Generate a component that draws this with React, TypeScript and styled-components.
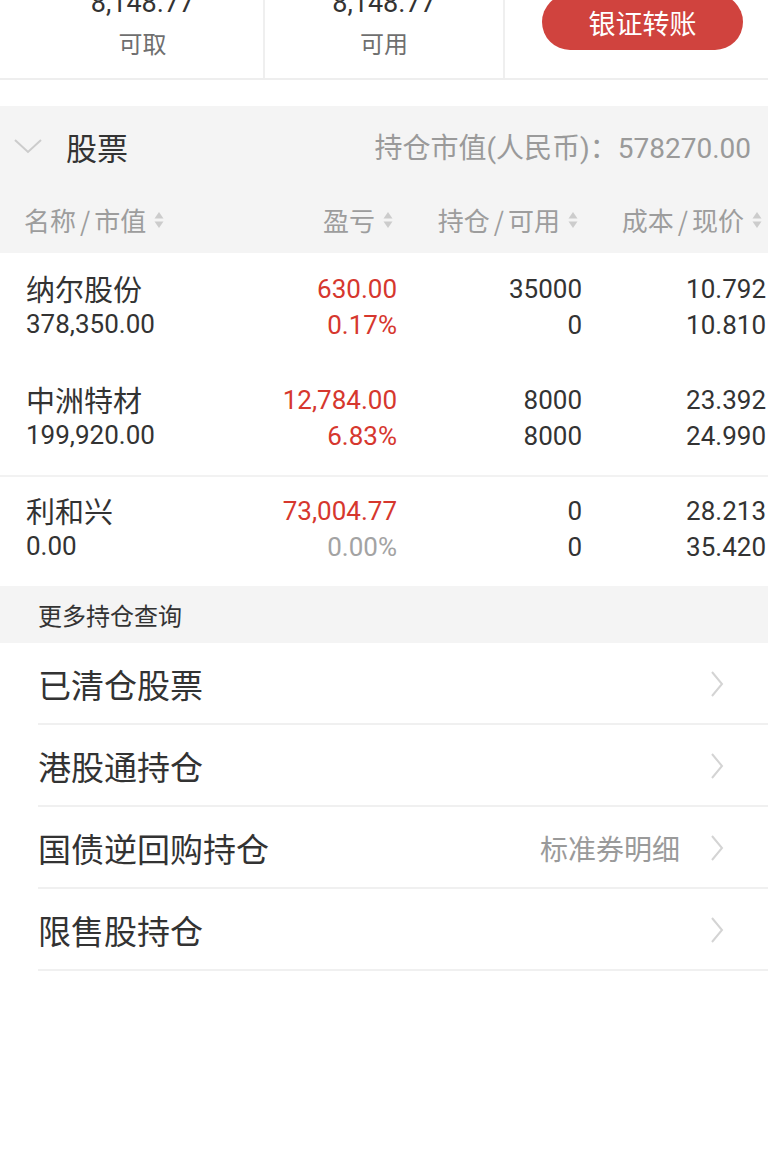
import styled, { createGlobalStyle } from 'styled-components'

const GlobalStyle = createGlobalStyle`
  body {
    margin: 0;
    background: #ffffff;
    font-family: Roboto, "Noto Sans CJK SC", sans-serif;
  }
`

const RED = '#d6372e'

interface Holding {
  name: string
  value: string
  profit: string
  ratio: string
  ratioMuted?: boolean
  position: string
  available: string
  cost: string
  price: string
  divider?: boolean
}

const holdings: Holding[] = [
  {
    name: '纳尔股份',
    value: '378,350.00',
    profit: '630.00',
    ratio: '0.17%',
    position: '35000',
    available: '0',
    cost: '10.792',
    price: '10.810',
  },
  {
    name: '中洲特材',
    value: '199,920.00',
    profit: '12,784.00',
    ratio: '6.83%',
    position: '8000',
    available: '8000',
    cost: '23.392',
    price: '24.990',
  },
  {
    name: '利和兴',
    value: '0.00',
    profit: '73,004.77',
    ratio: '0.00%',
    ratioMuted: true,
    position: '0',
    available: '0',
    cost: '28.213',
    price: '35.420',
    divider: true,
  },
]

const columns = [
  { left: '名称', right: '市值', align: 'start' as const },
  { left: '盈亏', align: 'end' as const },
  { left: '持仓', right: '可用', align: 'end' as const },
  { left: '成本', right: '现价', align: 'end' as const },
]

const queries = [
  { label: '已清仓股票' },
  { label: '港股通持仓' },
  { label: '国债逆回购持仓', extra: '标准券明细' },
  { label: '限售股持仓' },
]

const SortIcon = () => (
  <svg width="10" height="18" viewBox="0 0 10 18">
    <path d="M5 1 L9.5 7.5 H0.5 Z" fill="#cccccc" />
    <path d="M5 17 L9.5 10.5 H0.5 Z" fill="#cccccc" />
  </svg>
)

const ChevronDown = () => (
  <svg width="30" height="16" viewBox="0 0 30 16">
    <path d="M2 2 L15 14 L28 2" fill="none" stroke="#cccccc" strokeWidth="2" />
  </svg>
)

const ChevronRight = () => (
  <svg width="14" height="28" viewBox="0 0 14 28">
    <path d="M2 2 L12 14 L2 26" fill="none" stroke="#d4d4d4" strokeWidth="2" />
  </svg>
)

const App = () => {
  return (
    <Page>
      <GlobalStyle />
      <TopBar>
        <FundCell $first>
          <FundValue>8,148.77</FundValue>
          <FundLabel>可取</FundLabel>
        </FundCell>
        <FundCell>
          <FundValue>8,148.77</FundValue>
          <FundLabel>可用</FundLabel>
        </FundCell>
        <ActionCell>
          <TransferButton>银证转账</TransferButton>
        </ActionCell>
      </TopBar>

      <Section>
        <SectionTitle>
          <TitleLeft>
            <ChevronDown />
            <TitleText>股票</TitleText>
          </TitleLeft>
          <MarketValue>持仓市值(人民币)：578270.00</MarketValue>
        </SectionTitle>
        <HeaderRow>
          {columns.map((c) => (
            <HeaderCell key={c.left} $align={c.align}>
              <span>
                {c.left}
                {c.right && (
                  <>
                    <Slash>/</Slash>
                    {c.right}
                  </>
                )}
              </span>
              <SortIcon />
            </HeaderCell>
          ))}
        </HeaderRow>
      </Section>

      <Holdings>
        {holdings.map((h) => (
          <HoldingRow key={h.name} $divider={!!h.divider}>
            <Cell $align="start">
              <StockName>{h.name}</StockName>
              <Num>{h.value}</Num>
            </Cell>
            <Cell $align="end">
              <Num $color={RED}>{h.profit}</Num>
              <Num $color={h.ratioMuted ? '#a3a3a3' : RED}>{h.ratio}</Num>
            </Cell>
            <Cell $align="end">
              <Num>{h.position}</Num>
              <Num>{h.available}</Num>
            </Cell>
            <Cell $align="end">
              <Num>{h.cost}</Num>
              <Num>{h.price}</Num>
            </Cell>
          </HoldingRow>
        ))}
      </Holdings>

      <MoreHeader>更多持仓查询</MoreHeader>
      <QueryList>
        {queries.map((q) => (
          <QueryItem key={q.label}>
            <QueryLabel>{q.label}</QueryLabel>
            <QueryRight>
              {q.extra && <QueryExtra>{q.extra}</QueryExtra>}
              <ChevronRight />
            </QueryRight>
          </QueryItem>
        ))}
      </QueryList>
    </Page>
  )
}

export default App

const Page = styled.div`
  width: 768px;
  min-height: 1174px;
  overflow: hidden;
  background: #ffffff;
`

const TopBar = styled.div`
  display: grid;
  grid-template-columns: 265px 240px 1fr;
  height: 98px;
  margin-top: -20px;
  border-bottom: 2px solid #eeeeee;
  margin-bottom: 26px;
`

const FundCell = styled.div<{ $first?: boolean }>`
  display: flex;
  flex-direction: column;
  align-items: center;
  padding: 8px 0 0 ${({ $first }) => ($first ? '22px' : '0')};
  border-right: 2px solid #efefef;
`

const FundValue = styled.div`
  font-family: Roboto, sans-serif;
  font-size: 27px;
  line-height: 30px;
  color: #333333;
`

const FundLabel = styled.div`
  margin-top: 10px;
  font-family: "Noto Sans CJK SC", sans-serif;
  font-size: 24px;
  line-height: 30px;
  color: #6f6f6f;
`

const ActionCell = styled.div`
  display: flex;
  justify-content: center;
  padding: 14px 0 0 12px;
`

const TransferButton = styled.div`
  width: 201px;
  height: 56px;
  border-radius: 28px;
  background: #d0433e;
  color: #ffffff;
  display: flex;
  align-items: center;
  justify-content: center;
  font-family: "Noto Sans CJK SC", sans-serif;
  font-size: 27px;
`

const Section = styled.div`
  background: #f4f4f4;
`

const SectionTitle = styled.div`
  display: flex;
  align-items: center;
  justify-content: space-between;
  height: 80px;
  padding: 0 17px 0 13px;
`

const TitleLeft = styled.div`
  display: flex;
  align-items: center;
  gap: 23px;
`

const TitleText = styled.div`
  font-family: "Noto Sans CJK SC", sans-serif;
  font-size: 31px;
  color: #333333;
`

const MarketValue = styled.div`
  font-family: Roboto, "Noto Sans CJK SC", sans-serif;
  font-size: 28px;
  color: #9a9a9a;
`

const HeaderRow = styled.div`
  display: grid;
  grid-template-columns: 193px 180px 185px 184px;
  align-items: center;
  height: 67px;
  padding: 0 2px 0 24px;
`

const HeaderCell = styled.div<{ $align: 'start' | 'end' }>`
  display: flex;
  align-items: center;
  justify-content: ${({ $align }) => ($align === 'end' ? 'flex-end' : 'flex-start')};
  gap: 8px;
  padding-right: ${({ $align }) => ($align === 'end' ? '4px' : '0')};
  font-family: "Noto Sans CJK SC", sans-serif;
  font-size: 26px;
  color: #9d9d9d;
  white-space: nowrap;
`

const Slash = styled.span`
  margin: 0 4px;
`

const Holdings = styled.div`
  background: #ffffff;
`

const HoldingRow = styled.div<{ $divider: boolean }>`
  display: grid;
  grid-template-columns: 191px 180px 185px 184px;
  height: 111px;
  box-sizing: border-box;
  padding: 16px 2px 0 26px;
  border-top: 2px solid ${({ $divider }) => ($divider ? '#f2f2f2' : 'transparent')};
`

const Cell = styled.div<{ $align: 'start' | 'end' }>`
  display: flex;
  flex-direction: column;
  align-items: ${({ $align }) => ($align === 'end' ? 'flex-end' : 'flex-start')};
`

const StockName = styled.div`
  font-family: "Noto Sans CJK SC", sans-serif;
  font-size: 29px;
  line-height: 35px;
  color: #333333;
`

const Num = styled.div<{ $color?: string }>`
  font-family: Roboto, sans-serif;
  font-size: 26px;
  line-height: 36px;
  color: ${({ $color }) => $color || '#333333'};
`

const MoreHeader = styled.div`
  background: #f4f4f4;
  height: 57px;
  display: flex;
  align-items: center;
  padding-left: 38px;
  font-family: "Noto Sans CJK SC", sans-serif;
  font-size: 24px;
  color: #333333;
`

const QueryList = styled.div`
  padding-left: 38px;
`

const QueryItem = styled.div`
  display: flex;
  align-items: center;
  justify-content: space-between;
  height: 82px;
  box-sizing: border-box;
  padding-top: 2px;
  padding-right: 44px;
  border-bottom: 2px solid #f0f0f0;
`

const QueryLabel = styled.div`
  font-family: "Noto Sans CJK SC", sans-serif;
  font-size: 33px;
  color: #333333;
`

const QueryRight = styled.div`
  display: flex;
  align-items: center;
  gap: 30px;
`

const QueryExtra = styled.div`
  font-family: "Noto Sans CJK SC", sans-serif;
  font-size: 28px;
  color: #9a9a9a;
`
